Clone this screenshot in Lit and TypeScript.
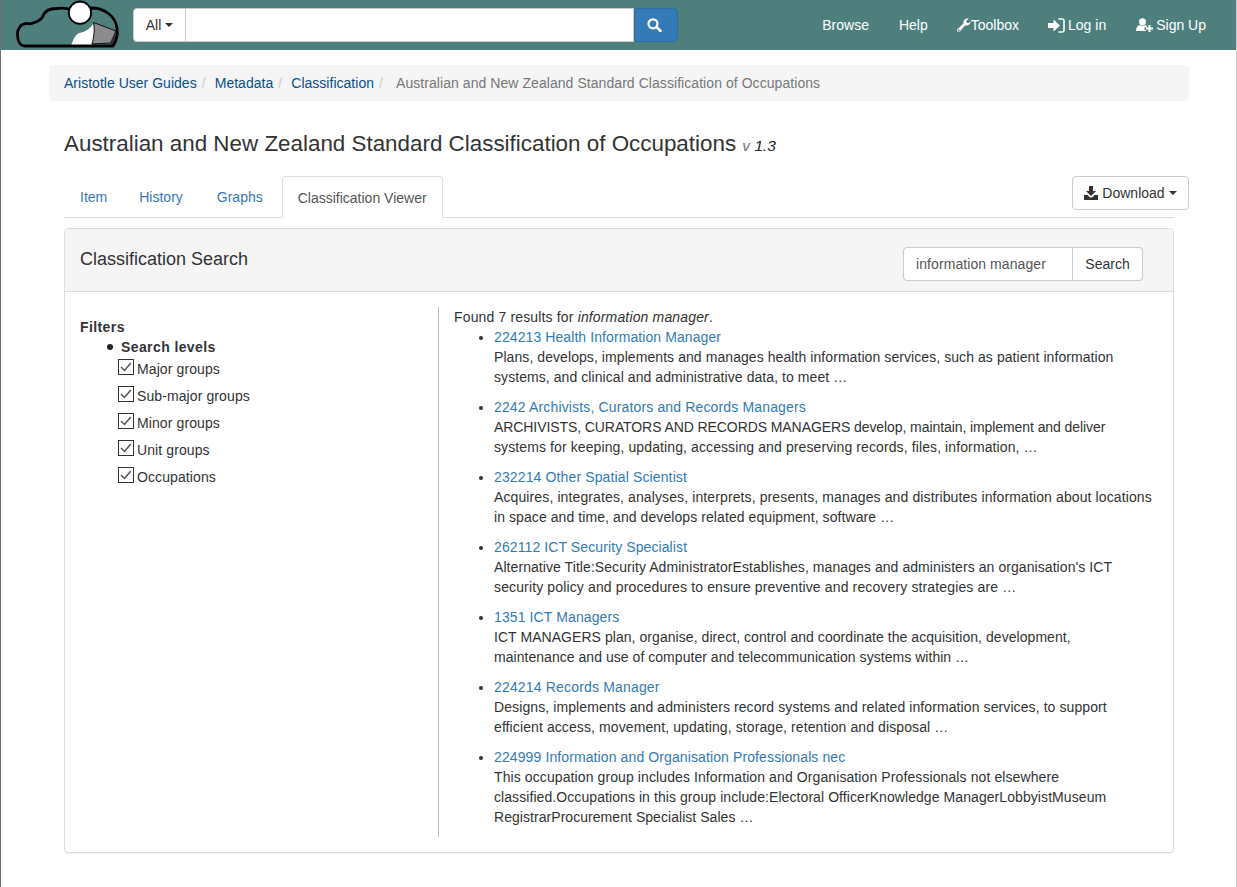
import { LitElement, html, css, svg } from "lit";
import { customElement } from "lit/decorators.js";

type Run = [string, number];
const results: { title: Run; lines: Run[] }[] = [
  { title: ["224213 Health Information Manager", 0.09], lines: [["Plans, develops, implements and manages health information services, such as patient information", 0.073], ["systems, and clinical and administrative data, to meet …", 0.07]] },
  { title: ["2242 Archivists, Curators and Records Managers", 0.15], lines: [["ARCHIVISTS, CURATORS AND RECORDS MANAGERS develop, maintain, implement and deliver", -0.083], ["systems for keeping, updating, accessing and preserving records, files, information, …", 0.105]] },
  { title: ["232214 Other Spatial Scientist", 0.13], lines: [["Acquires, integrates, analyses, interprets, presents, manages and distributes information about locations", 0.114], ["in space and time, and develops related equipment, software …", 0.08]] },
  { title: ["262112 ICT Security Specialist", 0.1], lines: [["Alternative Title:Security AdministratorEstablishes, manages and administers an organisation's ICT", 0.07], ["security policy and procedures to ensure preventive and recovery strategies are …", 0.136]] },
  { title: ["1351 ICT Managers", 0.11], lines: [["ICT MANAGERS plan, organise, direct, control and coordinate the acquisition, development,", 0.056], ["maintenance and use of computer and telecommunication systems within …", 0.04]] },
  { title: ["224214 Records Manager", 0.17], lines: [["Designs, implements and administers record systems and related information services, to support", 0.095], ["efficient access, movement, updating, storage, retention and disposal …", 0.1]] },
  { title: ["224999 Information and Organisation Professionals nec", 0.11], lines: [["This occupation group includes Information and Organisation Professionals not elsewhere", 0.1], ["classified.Occupations in this group include:Electoral OfficerKnowledge ManagerLobbyistMuseum", 0.076], ["RegistrarProcurement Specialist Sales …", 0.05]] },
];
const levels = ["Major groups", "Sub-major groups", "Minor groups", "Unit groups", "Occupations"];

const logo = svg`<svg class="logo" width="132" height="50" viewBox="1 0 132 50">
  <path d="M71 46 C73 40 75 35 79 33 C86 32 91 28 93.500 23 L94.500 33 L92 46 Z" fill="#fff"/>
  <path d="M93.500 22.500 L116 31 L110.500 43 L92 44 C94 37 95 29 93.500 22.500 Z" fill="#8c8c8c" stroke="#111" stroke-width="1"/>
  <path d="M116 31 L117.500 36 L114 46 L110 43.500 Z" fill="#333"/>
  <path d="M25 46 H113 C116.500 41 118 35 117 28 C115.500 16 104 8 92 8 L69 9 C65 8 60 8 56 8.500 C50 8.500 45 11 43 16 C41 21 36 22 33 23 C30 24.500 28 23.500 26 23.500 C21 24 17.500 28.500 17.500 34 C17.500 41 20 46 25 46 Z" fill="none" stroke="#000" stroke-width="2.800" stroke-linejoin="round"/>
  <circle cx="80" cy="12.700" r="11.200" fill="#fff" stroke="#000" stroke-width="1.800"/>
</svg>`;
const search = svg`<svg width="15" height="14" viewBox="0 0 15 14"><circle cx="6" cy="5.800" r="4.500" fill="none" stroke="#fff" stroke-width="2.200"/><path d="M9.500 9 L13.500 13" stroke="#fff" stroke-width="2.600" stroke-linecap="round"/></svg>`;
const wrench = svg`<svg class="nudge" width="14" height="14" viewBox="0 0 14 14"><path fill-rule="evenodd" d="M13.600 3.200 C13.800 5.500 12 7.500 9.700 7.500 C9.200 7.500 8.800 7.400 8.400 7.300 L2.900 13.200 C2.200 14 1 14 .4 13.300 C-.2 12.600 -.1 11.500 .6 10.900 L6.500 5.500 C6 3 7.700 .5 10.600 .3 C11 .3 11.400 .3 11.700 .4 L9.300 2.800 L9.800 4.700 L11.400 5.300 Z M1.800 11.500 a.8 .8 0 1 0 .01 0 Z" fill="#fff"/></svg>`;
const login = svg`<svg class="nudge" width="17" height="15" viewBox="0 0 17 15"><path d="M0 5 H5.500 V1.500 L12 7.500 L5.500 13.500 V10 H0 Z" fill="#fff"/><path d="M10.500 1 H14 C15.200 1 16 1.800 16 3 V12 C16 13.200 15.200 14 14 14 H10.500" fill="none" stroke="#fff" stroke-width="1.600"/></svg>`;
const signup = svg`<svg width="17" height="14" viewBox="0 0 17 14"><circle cx="6.500" cy="3.800" r="3.500" fill="#fff"/><path d="M0 13 C0 9.500 1.500 7.500 3.500 7 C5 8 8 8 9.500 7 L11 8.300 V9.500 H8.500 V12 H10 V13 Z" fill="#fff"/><path d="M10 10.500 H17 M13.500 7 V14" stroke="#fff" stroke-width="2"/></svg>`;
const dl = svg`<svg width="14" height="14" viewBox="0 0 14 14"><path d="M5 0 H9 V5 H12 L7 10 L2 5 H5 Z" fill="#333"/><path d="M0 9 H3.500 L6 11.500 H8 L10.500 9 H14 V14 H0 Z" fill="#333"/></svg>`;
const check = svg`<svg class="check" width="16" height="16" viewBox="0 0 16 16"><rect x=".5" y=".5" width="15" height="15" fill="#fff" stroke="#333"/><path d="M3 8 L6.500 11.500 L12.800 4" fill="none" stroke="#555" stroke-width="1.500"/></svg>`;

const run = ([t, s]: Run) => html`<span style="letter-spacing:${s}px">${t}</span>`;

@customElement("app-root")
export class AppRoot extends LitElement {
  static styles = css`
    :host { display: block; min-height: 887px; box-sizing: border-box; border-left: 1px solid #707070; border-right: 1px solid #ccc;
      font: 14px/20px "Liberation Sans", Arial, sans-serif; color: #333; background: #fff; }
    * { box-sizing: border-box; }
    a { text-decoration: none; color: #337ab7; }
    .nav { height: 50px; background: #4f7f7d; display: flex; align-items: center; color: #fff; }
    .logo { display: block; flex: none; }
    .sf { display: flex; height: 34px; width: 545px; color: #333; }
    .all { width: 53px; background: #fff; border: 1px solid #ccc; border-radius: 4px 0 0 4px; display: flex; align-items: center; justify-content: center; gap: 4px; }
    .caret { display: inline-block; border-top: 4px solid currentColor; border-left: 4px solid transparent; border-right: 4px solid transparent; }
    .q { flex: 1; background: #fff; border: 1px solid #ccc; border-left: 0; }
    .go { width: 44px; background: #337ab7; border: 1px solid #2e6da4; border-radius: 0 4px 4px 0; display: flex; align-items: center; justify-content: center; padding-right: 3px; }
    .links { margin-left: auto; display: flex; align-items: center; padding-right: 15px; }
    .links span { display: flex; align-items: center; padding: 0 15px; color: #fff; }
    .links .s2 svg { margin-right: 3px; }
    .links .nudge { margin-left: -1px; }
    .main { padding: 15px 47px 0 48px; }
    .crumb { height: 36px; background: #f5f5f5; border-radius: 4px; padding: 8px 15px; display: flex; }
    .crumb a { color: #0b4f8a; letter-spacing: .02px; }
    .crumb i { font-style: normal; color: #ccc; padding: 0 5px; width: 18px; }
    .crumb b { font-weight: 400; color: #777; margin-left: 4px; letter-spacing: .06px; }
    h1 { margin: 28px 0 0 15px; font-size: 22.400px; font-weight: 400; line-height: 30px; height: 29px; white-space: nowrap; color: #333; }
    h1 small { font-size: 15.500px; font-style: italic; color: #777; }
    h1 small em { color: #222; }
    .tabrow { position: relative; margin: 18px 0 0 15px; width: 1110px; height: 42px; border-bottom: 1px solid #ddd; display: flex; }
    .tab { padding: 11px 17px 10px 16px; height: 41px; }
    .tab:first-child { padding-right: 16px; }
    .tab:nth-child(2) { padding-right: 18px; }
    .tab.on { height: 42px; margin-left: 2px; padding: 11px 15px 10px; width: 161px; background: #fff; border: 1px solid #ddd; border-bottom-color: #fff; border-radius: 4px 4px 0 0; color: #555; white-space: nowrap; }
    .dl { position: absolute; top: 0; left: 1008px; width: 117px; height: 34px; border: 1px solid #ccc; border-radius: 4px; background: #fff; display: flex; align-items: center; justify-content: center; gap: 4px; }
    .panel { margin: 10px 0 0 15px; width: 1110px; height: 625px; border: 1px solid #ddd; border-radius: 4px; box-shadow: 0 1px 1px rgba(0,0,0,.05); }
    .ph { height: 63px; background: #f5f5f5; border-bottom: 1px solid #ddd; display: flex; align-items: center; padding: 0 30px 3px 15px; border-radius: 3px 3px 0 0; }
    .ph h3 { margin: 0; font-size: 18px; font-weight: 400; line-height: 20px; }
    .sb { margin-left: auto; display: flex; height: 34px; margin-top: 11px; }
    .inp { width: 170px; background: #fff; border: 1px solid #ccc; border-radius: 4px 0 0 4px; padding: 6px 12px; color: #555; letter-spacing: .08px; }
    .btn { width: 70px; background: #fff; border: 1px solid #ccc; border-left: 0; border-radius: 0 4px 4px 0; padding: 6px 0; text-align: center; }
    .pb { display: flex; padding: 15px 15px 0; }
    .filters { width: 358px; padding-top: 10px; }
    .filters b { display: block; letter-spacing: .4px; }
    .lv { position: relative; margin-left: 41px; }
    .lv::before { content: ""; position: absolute; left: -14px; top: 7px; width: 6px; height: 6px; border-radius: 50%; background: #222; }
    .opts { margin-left: 38px; margin-top: -2px; letter-spacing: .1px; }
    .opt { height: 27px; display: flex; align-items: center; }
    .check { margin-right: 3px; margin-top: -3px; flex: none; }
    .res { flex: 1; height: 530px; border-left: 1px solid #bbb; padding-left: 15px; }
    .found { letter-spacing: .15px; }
    ul { margin: 0; padding: 0 0 0 40px; }
    li { margin-bottom: 10px; white-space: nowrap; }
    li a { display: block; }
    li span { display: block; }
  `;
  render() {
    return html`
      <div class="nav">
        ${logo}
        <div class="sf">
          <div class="all">All <span class="caret"></span></div>
          <div class="q"></div>
          <div class="go">${search}</div>
        </div>
        <div class="links">
          <span>Browse</span><span>Help</span><span>${wrench}Toolbox</span><span class="s2">${login}Log in</span><span class="s2">${signup}Sign Up</span>
        </div>
      </div>
      <div class="main">
        <div class="crumb">
          <a>Aristotle User Guides</a><i>/</i><a>Metadata</a><i>/</i><a>Classification</a><i>/</i>
          <b>Australian and New Zealand Standard Classification of Occupations</b>
        </div>
        <h1>Australian and New Zealand Standard Classification of Occupations <small>v <em>1.3</em></small></h1>
        <div class="tabrow">
          <a class="tab">Item</a><a class="tab">History</a><a class="tab">Graphs</a>
          <div class="tab on">Classification Viewer</div>
          <div class="dl">${dl} Download <span class="caret"></span></div>
        </div>
        <div class="panel">
          <div class="ph">
            <h3>Classification Search</h3>
            <div class="sb"><div class="inp">information manager</div><div class="btn">Search</div></div>
          </div>
          <div class="pb">
            <div class="filters">
              <b>Filters</b>
              <b class="lv">Search levels</b>
              <div class="opts">${levels.map((l) => html`<div class="opt">${check}${l}</div>`)}</div>
            </div>
            <div class="res">
              <div class="found">Found 7 results for <em>information manager</em>.</div>
              <ul>
                ${results.map((r) => html`<li><a>${run(r.title)}</a>${r.lines.map(run)}</li>`)}
              </ul>
            </div>
          </div>
        </div>
      </div>
    `;
  }
}
